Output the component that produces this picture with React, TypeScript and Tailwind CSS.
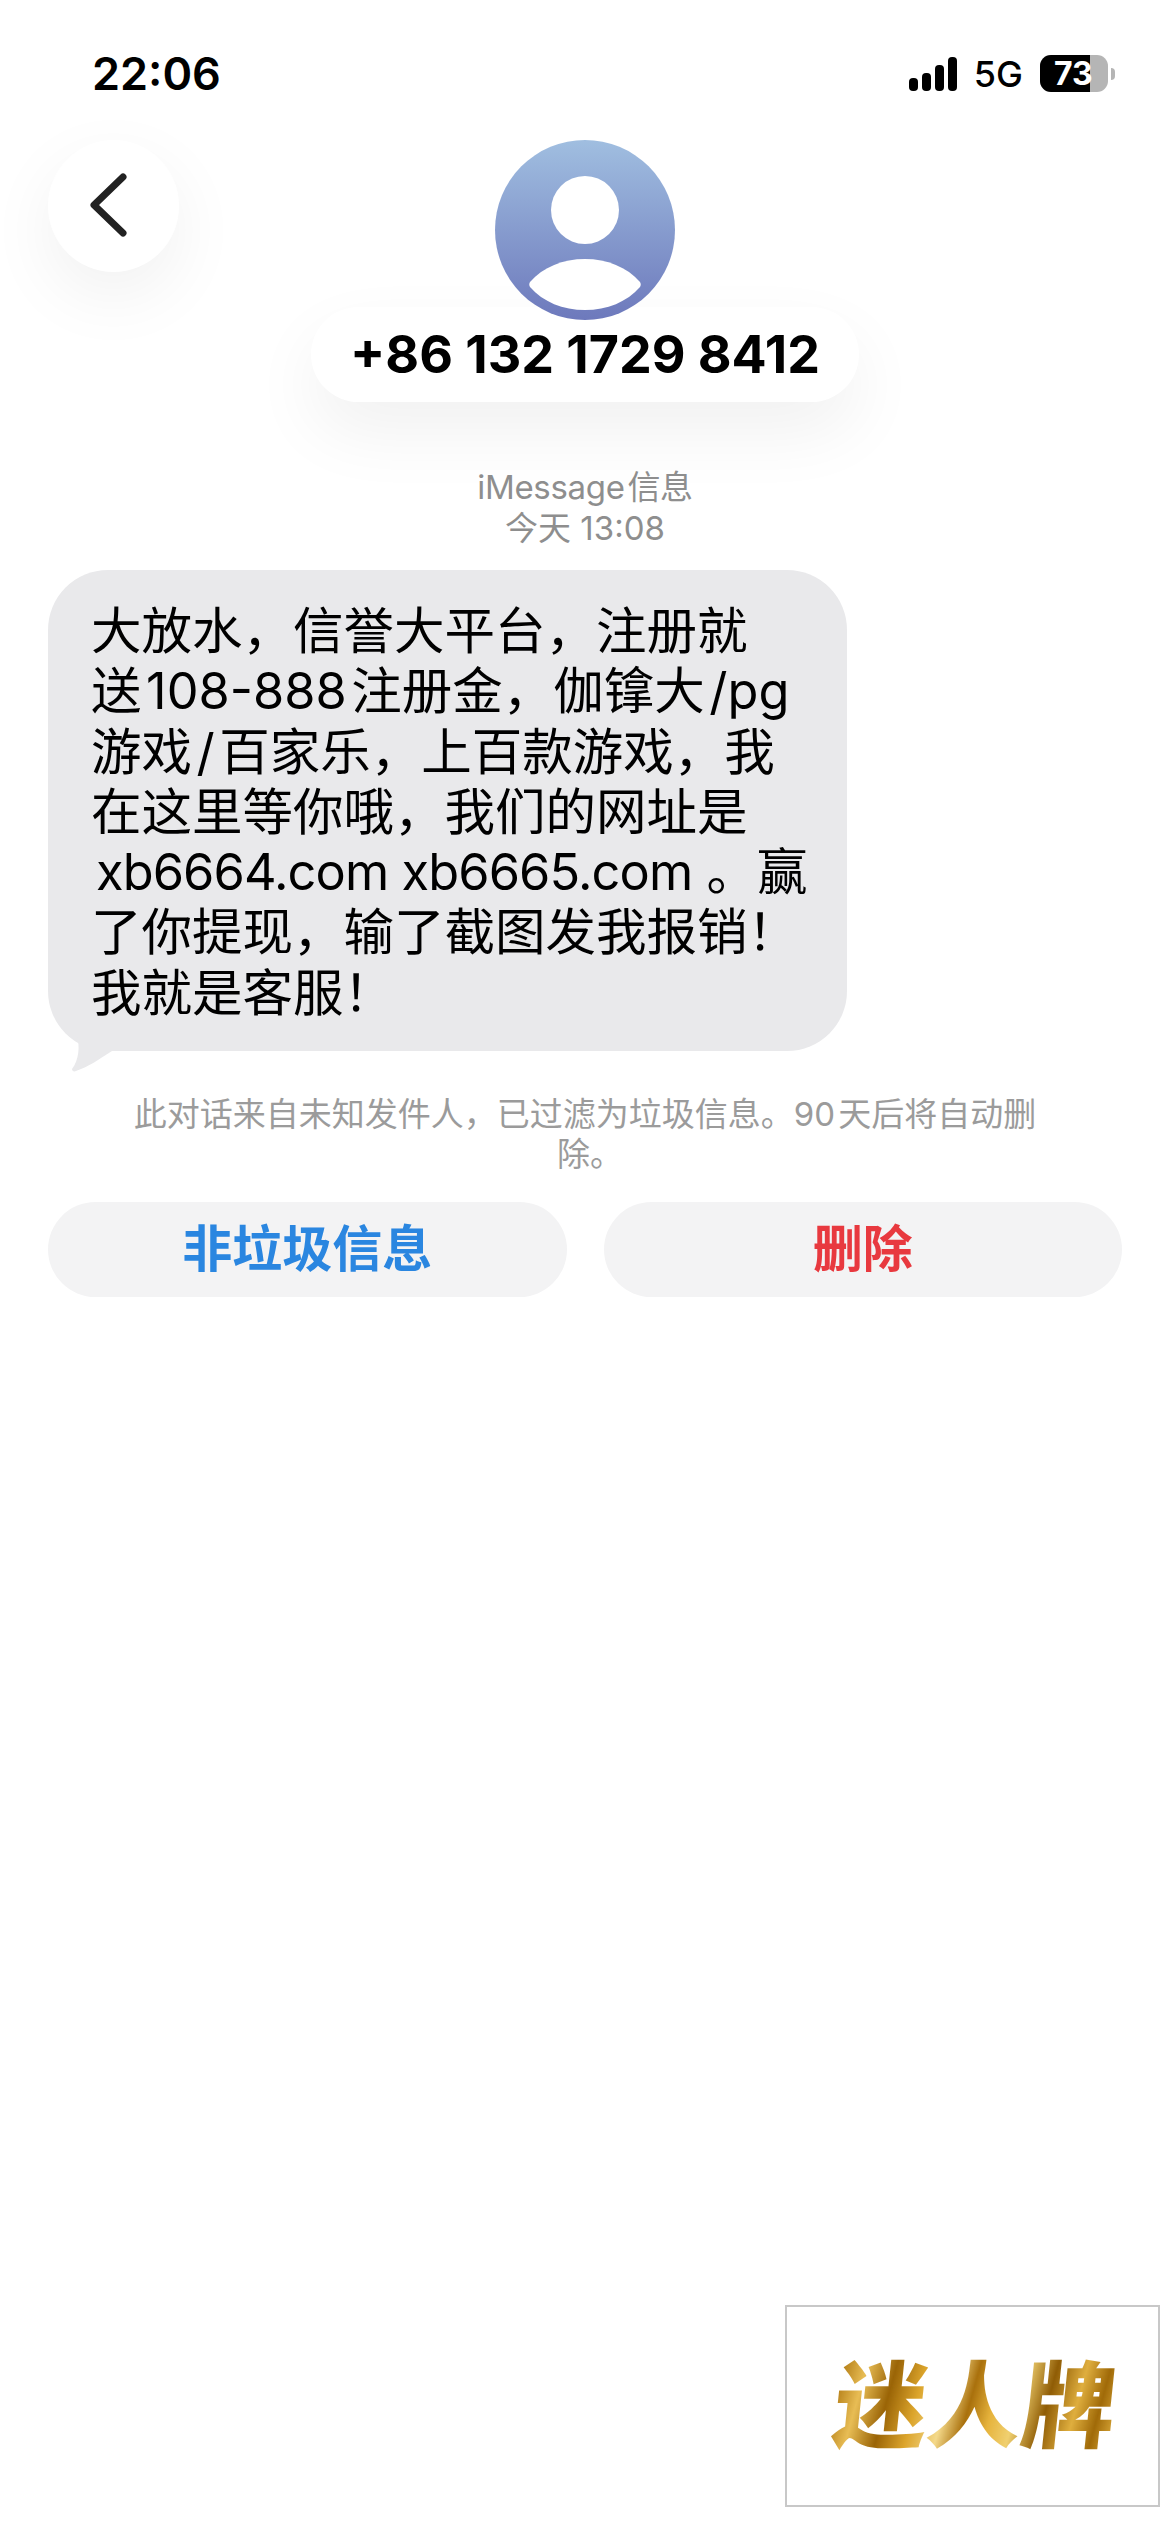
const HAIR = '\u200a';

const message = [
  '大放水，信誉大平台，注册就',
  `送${HAIR}108-888${HAIR}注册金，伽镎大${HAIR}/pg`,
  `游戏${HAIR}/${HAIR}百家乐，上百款游戏，我`,
  '在这里等你哦，我们的网址是',
  null,
  '了你提现，输了截图发我报销！',
  '我就是客服！',
];

function SignalBars() {
  return (
    <div className="flex items-end gap-[4px]">
      <div className="h-[13px] w-[9px] rounded-[4px] bg-black" />
      <div className="h-[18px] w-[9px] rounded-[4px] bg-black" />
      <div className="h-[26px] w-[9px] rounded-[4px] bg-black" />
      <div className="h-[34px] w-[9px] rounded-[4px] bg-black" />
    </div>
  );
}

function Battery() {
  return (
    <div className="flex items-center gap-[3px]">
      <div className="relative flex h-[37px] w-[68px] items-center rounded-[11px] bg-[#b5b5b5]">
        <div className="h-full w-[50px] rounded-l-[11px] bg-black" />
        <span className="absolute left-[14px] text-[32px] leading-[37px] font-bold text-white">73</span>
      </div>
      <div className="h-[12px] w-[4px] rounded-r-full bg-[#b5b5b5]" />
    </div>
  );
}

function Avatar() {
  return (
    <svg width="180" height="180" viewBox="0 0 180 180" className="relative z-10 block">
      <defs>
        <linearGradient id="avatarFill" x1="0" y1="0" x2="0" y2="1">
          <stop offset="0" stopColor="#a0bee0" />
          <stop offset="1" stopColor="#6d79bc" />
        </linearGradient>
      </defs>
      <circle cx="90" cy="90" r="90" fill="url(#avatarFill)" />
      <circle cx="90" cy="70" r="34" fill="#fff" />
      <path
        d="M35 142 C48 127 68 119 90 119 C112 119 132 127 145 142 C146 144 146 145 145 147 C132 162 112 170 90 170 C68 170 48 162 35 147 C34 145 34 144 35 142 Z"
        fill="#fff"
      />
    </svg>
  );
}

export default function App() {
  return (
    <div
      lang="zh-CN"
      className="relative min-h-[2532px] w-[1170px] bg-white px-[48px] font-['Inter','Noto_Sans_CJK_SC',sans-serif] text-black"
    >
      {/* Status bar */}
      <div className="flex h-[140px] items-start justify-between pt-[47px] pr-[7px] pl-[44px]">
        <span className="text-[45px] leading-[54px] font-semibold">22:06</span>
        <div className="flex items-center gap-[17px] pt-[8px]">
          <SignalBars />
          <span className="text-[36px] leading-none font-medium">5G</span>
          <Battery />
        </div>
      </div>

      {/* Header */}
      <div className="grid grid-cols-[1fr_auto_1fr]">
        <div>
          <button className="flex h-[132px] w-[131px] items-center justify-center rounded-full bg-white shadow-[0_24px_70px_rgba(0,0,0,0.06)]">
            <svg width="40" height="64" viewBox="0 0 40 64" fill="none" className="mr-[12px] -mt-[3px]">
              <path d="M35 4 L6 32 L35 60" stroke="#222" strokeWidth="7" strokeLinecap="round" strokeLinejoin="round" />
            </svg>
          </button>
        </div>
        <div className="flex flex-col items-center">
          <Avatar />
          <div className="-mt-[13px] flex h-[95px] w-[548px] items-center justify-center rounded-full bg-white shadow-[0_30px_70px_rgba(0,0,0,0.06)]">
            <span className="text-[52px] font-bold">+86 132 1729 8412</span>
          </div>
        </div>
        <div />
      </div>

      {/* Timestamp */}
      <div className="mt-[65px] text-center text-[33px] leading-[41px] text-[#8e8e8e]">
        <div className="tracking-[-0.3px]">iMessage{HAIR}信息</div>
        <div>今天 13:08</div>
      </div>

      {/* Message bubble */}
      <div className="relative mt-[21px] w-[799px] rounded-[60px] bg-[#e9e9eb] px-[43px] pt-[31px] pb-[28px] text-[50.5px] leading-[60.3px]">
        {message.map((line, i) =>
          line === null ? (
            <div key={i} className="whitespace-pre">
              <span className="pl-[5px] tracking-[-0.9px]">xb6664.com xb6665.com</span> 。赢
            </div>
          ) : (
            <div key={i} className="whitespace-pre">{line}</div>
          ),
        )}
        <svg width="60" height="50" viewBox="0 0 60 50" className="absolute -bottom-[21px] left-[20px]">
          <path d="M9 15 C12 24 11 38 4 47 C4 49 6 50 8 49 C20 45 30 38 44 29 L44 0 L9 0 Z" fill="#e9e9eb" />
        </svg>
      </div>

      {/* Junk notice */}
      <div className="mx-auto mt-[43px] w-[910px] text-center text-[33px] leading-[40px] text-[#9b9b9b]">
        <div>此对话来自未知发件人，已过滤为垃圾信息。90{HAIR}天后将自动删</div>
        <div className="pl-[10px]">除。</div>
      </div>

      {/* Actions */}
      <div className="mt-[28px] grid grid-cols-2 gap-[37px]">
        <button className="h-[95px] rounded-full bg-[#f3f3f4] text-[50px] font-semibold text-[#2a86e0]">非垃圾信息</button>
        <button className="h-[95px] rounded-full bg-[#f3f3f4] text-[50px] font-semibold text-[#e8393f]">删除</button>
      </div>

      {/* Watermark */}
      <div className="absolute top-[2305px] left-[785px] flex h-[202px] w-[375px] items-center justify-center border-2 border-[#c8c8c8] bg-white">
        <span className="ml-[6px] -skew-x-6 bg-[linear-gradient(100deg,#a86f08_0%,#e8bd55_10%,#9a6406_20%,#dca52c_30%,#f4d98a_40%,#a9700c_48%,#e6b33c_56%,#f0d070_64%,#8f5c05_74%,#dfae3e_84%,#a06a08_92%,#dfae3e_100%)] bg-clip-text text-[94px] leading-none font-black text-transparent">
          迷人牌
        </span>
      </div>
    </div>
  );
}
